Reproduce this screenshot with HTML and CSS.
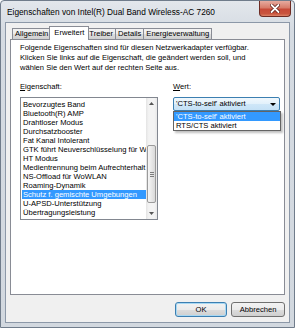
FILE: index.html
```html
<!DOCTYPE html>
<html lang="de">
<head>
    <meta charset="UTF-8">
    <title>Eigenschaften von Intel(R) Dual Band Wireless-AC 7260</title>
    <link rel="stylesheet" href="styles.css">
</head>
<body>
    <div class="window">
        <div class="titlebar">
            <span class="title">Eigenschaften von Intel(R) Dual Band Wireless-AC 7260</span>
            <div class="close-btn">
                <svg width="10" height="9" viewBox="0 0 10 9">
                    <path d="M1.5 1 L8.5 8 M8.5 1 L1.5 8" stroke="#5a1a14" stroke-width="3.4" stroke-linecap="round"/>
                    <path d="M1.5 1 L8.5 8 M8.5 1 L1.5 8" stroke="#ffffff" stroke-width="1.8" stroke-linecap="round"/>
                </svg>
            </div>
        </div>
        <div class="client">
            <div class="tabs">
                <div class="tab">Allgemein</div>
                <div class="tab active">Erweitert</div>
                <div class="tab">Treiber</div>
                <div class="tab">Details</div>
                <div class="tab">Energieverwaltung</div>
            </div>
            <div class="panel">
                <p class="intro">
                    Folgende Eigenschaften sind für diesen Netzwerkadapter verfügbar.<br>
                    Klicken Sie links auf die Eigenschaft, die geändert werden soll, und<br>
                    wählen Sie den Wert auf der rechten Seite aus.
                </p>
                <div class="fields">
                    <div class="field-prop">
                        <div class="label"><u>E</u>igenschaft:</div>
                        <div class="listbox">
                            <ul class="items">
                                <li>Bevorzugtes Band</li>
                                <li>Bluetooth(R) AMP</li>
                                <li>Drahtloser Modus</li>
                                <li>Durchsatzbooster</li>
                                <li>Fat Kanal Intolerant</li>
                                <li>GTK führt Neuverschlüsselung für W</li>
                                <li>HT Modus</li>
                                <li>Medientrennung beim Aufrechterhalt</li>
                                <li>NS-Offload für WoWLAN</li>
                                <li>Roaming-Dynamik</li>
                                <li class="selected">Schutz f. gemischte Umgebungen</li>
                                <li>U-APSD-Unterstützung</li>
                                <li>Übertragungsleistung</li>
                            </ul>
                            <div class="scrollbar">
                                <div class="sb-arrow">
                                    <svg width="5" height="3" viewBox="0 0 5 3"><polygon points="0,3 2.5,0 5,3" fill="#555"/></svg>
                                </div>
                                <div class="sb-track">
                                    <div class="sb-thumb"><span class="grip"></span></div>
                                </div>
                                <div class="sb-arrow">
                                    <svg width="5" height="3" viewBox="0 0 5 3"><polygon points="0,0 5,0 2.5,3" fill="#555"/></svg>
                                </div>
                            </div>
                        </div>
                    </div>
                    <div class="field-value">
                        <div class="label"><u>W</u>ert:</div>
                        <div class="combo-wrap">
                            <div class="combo">
                                <span>'CTS-to-self' aktiviert</span>
                                <svg width="6" height="3" viewBox="0 0 6 3"><polygon points="0,0 6,0 3,3" fill="#000"/></svg>
                            </div>
                            <ul class="dropdown">
                                <li class="selected">'CTS-to-self' aktiviert</li>
                                <li>RTS/CTS aktiviert</li>
                            </ul>
                        </div>
                    </div>
                </div>
            </div>
            <div class="buttons">
                <button class="btn default">OK</button>
                <button class="btn">Abbrechen</button>
            </div>
        </div>
    </div>
</body>
</html>
```

FILE: styles.css
```css
body {
    margin: 0;
    background: #ffffff;
    font-family: "Liberation Sans", Arial, sans-serif;
    font-size: 7.6px;
    color: #000;
}
.window {
    width: 295px;
    height: 328px;
    box-sizing: border-box;
    border: 1px solid #707c8b;
    border-radius: 4px 4px 0 0;
    padding: 0 4px 4px 4px;
    background: linear-gradient(#e3e7ec, #d5dbe2 30px, #d2d8df);
    display: flex;
    flex-direction: column;
}
.titlebar {
    height: 21px;
    display: flex;
    align-items: flex-start;
    justify-content: space-between;
}
.title {
    font-size: 8.3px;
    line-height: 10px;
    margin: 6px 0 0 2px;
}
.close-btn {
    width: 32px;
    height: 16px;
    margin-right: -1px;
    box-sizing: border-box;
    border: 1px solid #6e2c24;
    border-top: none;
    border-radius: 0 0 4px 4px;
    background: linear-gradient(#e6ab9f, #d77c6a 45%, #c74a38 55%, #c9553e 85%, #dc8468);
    display: flex;
    align-items: center;
    justify-content: center;
}
.client {
    flex: 1;
    border: 1px solid #8c98a8;
    background: #f0f0f0;
    padding: 3px 4px 5px 4px;
    display: flex;
    flex-direction: column;
}
.tabs {
    height: 13px;
    display: flex;
    align-items: flex-end;
    padding-left: 2px;
    position: relative;
    z-index: 1;
}
.tab {
    height: 11px;
    box-sizing: border-box;
    line-height: 10px;
    padding: 0 2px;
    border: 1px solid #898c95;
    border-bottom: none;
    margin-left: -1px;
    background: linear-gradient(#f3f3f3, #ebebeb 50%, #dddddd 51%, #cfcfcf);
    white-space: nowrap;
}
.tab:first-child {
    margin-left: 0;
}
.tab.active {
    height: 14px;
    margin: 0 -2px -1px -2px;
    padding: 0 4px;
    line-height: 11px;
    background: #ffffff;
    position: relative;
    z-index: 2;
}
.panel {
    flex: 1;
    background: #ffffff;
    border: 1px solid #898c95;
    padding: 3px 4px 0 9px;
}
.intro {
    margin: 0;
    line-height: 10px;
}
.fields {
    display: flex;
    gap: 15px;
    margin-top: 9px;
}
.label {
    line-height: 10px;
    margin-bottom: 5px;
}
.field-prop {
    width: 138px;
}
.field-value {
    width: 107px;
}
.listbox {
    height: 123px;
    box-sizing: border-box;
    border: 1px solid #828790;
    display: flex;
}
.items {
    flex: 1;
    min-width: 0;
    list-style: none;
    margin: 0;
    padding: 2px 0 0 1px;
    overflow: hidden;
}
.items li {
    height: 9px;
    line-height: 9px;
    padding-left: 1px;
    white-space: nowrap;
    overflow: hidden;
}
.items li.selected {
    background: #3399ff;
    color: #ffffff;
}
.scrollbar {
    width: 11px;
    display: flex;
    flex-direction: column;
    background: linear-gradient(to right, #e4e4e4, #f3f3f3 25%, #f3f3f3 75%, #e8e8e8);
}
.sb-arrow {
    height: 11px;
    display: flex;
    align-items: center;
    justify-content: center;
}
.sb-track {
    flex: 1;
    padding-top: 36px;
}
.sb-thumb {
    height: 58px;
    box-sizing: border-box;
    margin: 0 1px 0 1px;
    border: 1px solid #9a9a9a;
    border-radius: 2px;
    background: linear-gradient(to right, #f6f6f6, #e8e8e8 50%, #d9d9d9);
    display: flex;
    align-items: center;
    justify-content: center;
}
.grip {
    width: 4px;
    height: 5px;
    background: repeating-linear-gradient(#7d7d7d 0 1px, transparent 1px 2px);
}
.combo-wrap {
    position: relative;
}
.combo {
    height: 14px;
    box-sizing: border-box;
    border: 1px solid #3c7fb1;
    border-radius: 2px;
    background: linear-gradient(#f1f8fd, #e2f1fb 50%, #cfe7f8 51%, #c4e1f6);
    padding: 0 3px 0 2px;
    display: flex;
    align-items: center;
    justify-content: space-between;
    line-height: 10px;
}
.dropdown {
    position: absolute;
    top: 14px;
    left: 0;
    right: -1px;
    margin: 0;
    padding: 0;
    list-style: none;
    background: #ffffff;
    border: 1px solid #646464;
    box-shadow: 2px 2px 2px rgba(0, 0, 0, 0.25);
}
.dropdown li {
    height: 9px;
    line-height: 9px;
    padding-left: 2px;
    white-space: nowrap;
}
.dropdown li.selected {
    background: #3399ff;
    color: #ffffff;
}
.buttons {
    display: flex;
    justify-content: flex-end;
    gap: 4px;
    margin-top: 7px;
}
.btn {
    height: 15px;
    width: 52px;
    padding: 0;
    font: inherit;
    color: #000;
    border: 1px solid #707070;
    border-radius: 3px;
    background: linear-gradient(#f2f2f2, #ebebeb 50%, #dddddd 51%, #cfcfcf);
}
.btn + .btn {
    width: 54px;
}
.btn.default {
    border-color: #3c7fb1;
    box-shadow: inset 0 0 0 1px #a8d8f3;
}
```
